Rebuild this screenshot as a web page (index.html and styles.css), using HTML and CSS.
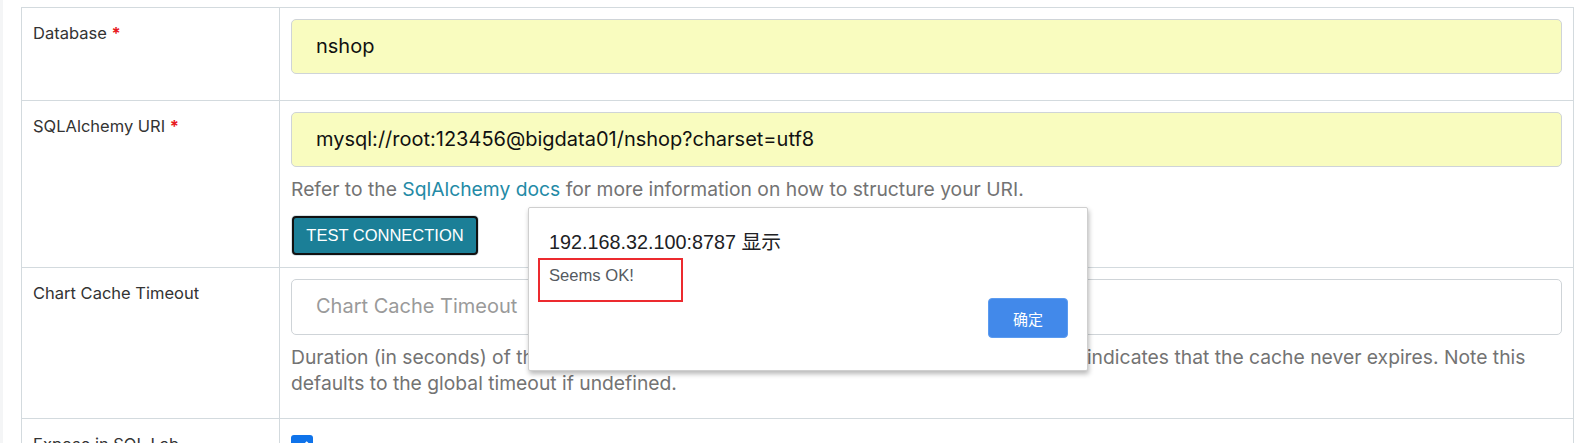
FILE: index.html
```html
<!DOCTYPE html>
<html>
<head>
<meta charset="utf-8">
<link rel="stylesheet" href="styles.css">
</head>
<body>
<div class="page">
  <div class="edge"></div>
  <table class="form-table">
    <tr class="row row-db">
      <td class="label-cell"><span class="label">Database <span class="req">*</span></span></td>
      <td class="field-cell">
        <div class="input autofill">nshop</div>
      </td>
    </tr>
    <tr class="row row-uri">
      <td class="label-cell"><span class="label">SQLAlchemy URI <span class="req">*</span></span></td>
      <td class="field-cell">
        <div class="input autofill">mysql://root:123456@bigdata01/nshop?charset=utf8</div>
        <p class="help">Refer to the <a class="link">SqlAlchemy docs</a> for more information on how to structure your URI.</p>
        <button class="btn-test">TEST CONNECTION</button>
      </td>
    </tr>
    <tr class="row row-cache">
      <td class="label-cell"><span class="label">Chart Cache Timeout</span></td>
      <td class="field-cell">
        <div class="input placeholder">Chart Cache Timeout</div>
        <p class="help">Duration (in seconds) of the caching timeout for charts of this database. A timeout of 0 indicates that the cache never expires. Note this defaults to the global timeout if undefined.</p>
      </td>
    </tr>
    <tr class="row row-expose">
      <td class="label-cell"><span class="label">Expose in SQL Lab</span></td>
      <td class="field-cell">
        <span class="checkbox"><svg width="22" height="22" viewBox="0 0 22 22"><path d="M5.5 11.5l3.5 3.5 7.5-8" fill="none" stroke="#fff" stroke-width="2.4"/></svg></span>
      </td>
    </tr>
  </table>

  <div class="alert">
    <div class="alert-title">192.168.32.100:8787 显示</div>
    <div class="alert-msg">Seems OK!</div>
    <div class="annot"></div>
    <div class="alert-actions"><button class="btn-ok">确定</button></div>
  </div>
</div>
</body>
</html>
```

FILE: styles.css
```css
html, body {
  margin: 0;
  padding: 0;
  background: #fff;
  height: 443px;
  overflow: hidden;
}

.page {
  position: relative;
  padding: 7px 0 0 21px;
  font-family: Inter, "Noto Sans", sans-serif;
}

.edge {
  position: absolute;
  left: 0;
  top: 0;
  width: 3px;
  height: 443px;
  background: #f4f5f6;
}

.form-table {
  width: 1553px;
  border-collapse: collapse;
  border: 1px solid #d3dade;
}

.form-table td {
  border: 1px solid #d3dade;
  padding: 11px;
  vertical-align: top;
}

.label-cell {
  width: 235px;
}

.label {
  display: block;
  padding-top: 3px;
  font-size: 16.5px;
  line-height: 22px;
  color: #333;
}

.req {
  color: #e8191e;
  font-weight: 700;
}

.row-db td { padding-bottom: 26px; }
.row-uri td { padding-bottom: 12px; }
.row-cache td { padding-bottom: 22px; }

.input {
  box-sizing: border-box;
  height: 55px;
  border: 1px solid #cfd4d8;
  border-radius: 5px;
  padding: 0 24px;
  font-size: 20px;
  line-height: 53px;
  color: #111;
  background: #fff;
}

.input.autofill {
  background: #f9fcbf;
}

.input.placeholder {
  height: 56px;
  color: #9a9a9a;
}

.help {
  margin: 9px 0 0;
  font-size: 19.3px;
  line-height: 26px;
  color: #737373;
}

.link {
  color: #238aa6;
  text-decoration: none;
}

.btn-test {
  display: block;
  margin-top: 14px;
  margin-left: 1px;
  box-sizing: border-box;
  width: 186px;
  height: 39px;
  background: #1b7f97;
  color: #fff;
  border: 2px solid #111;
  border-radius: 4px;
  box-shadow: 0 0 0 1px #d8e3e7;
  font-family: "Liberation Sans", Arial, sans-serif;
  font-size: 16.5px;
  padding: 0;
}

.checkbox {
  display: block;
  margin-top: 5px;
  width: 22px;
  height: 22px;
  border-radius: 3px;
  background: #0f73ea;
}

.checkbox svg { display: block; }

.alert {
  position: absolute;
  left: 528px;
  top: 207px;
  width: 560px;
  height: 164px;
  box-sizing: border-box;
  background: #fff;
  border: 1px solid #cfcfcf;
  border-radius: 2px;
  box-shadow: 1px 3px 5px rgba(0, 0, 0, 0.28);
  padding: 22px 19px 0 20px;
  font-family: "Liberation Sans", Arial, "Noto Sans CJK SC", sans-serif;
}

.alert-title {
  font-size: 19.8px;
  line-height: 24px;
  color: #202124;
  font-family: "Liberation Sans", Arial, "Noto Sans CJK SC", sans-serif;
}

.alert-msg {
  margin-top: 12px;
  font-size: 16.6px;
  line-height: 20px;
  color: #555a5f;
}

.annot {
  position: absolute;
  left: 9px;
  top: 50px;
  width: 141px;
  height: 40px;
  border: 2px solid #ec2a2f;
}

.alert-actions {
  display: flex;
  justify-content: flex-end;
  margin-top: 12px;
}

.btn-ok {
  width: 80px;
  height: 40px;
  background: #4289ea;
  color: #fff;
  border: 1px solid #5b9bf0;
  border-radius: 4px;
  font-family: "Noto Sans CJK SC", sans-serif;
  font-size: 15px;
  padding: 0;
}
```
